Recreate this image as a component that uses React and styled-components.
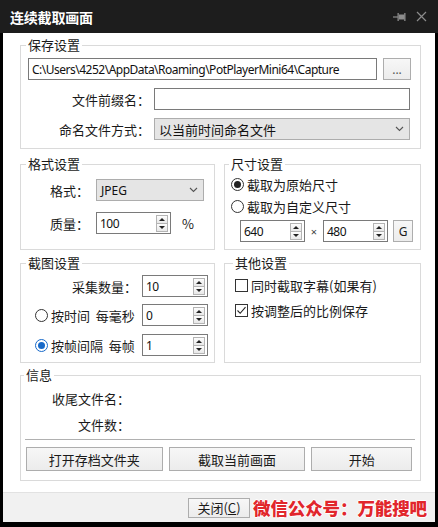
import React from 'react'
import styled, { createGlobalStyle } from 'styled-components'

const GlobalStyle = createGlobalStyle`
  html, body { margin: 0; padding: 0; background: #000; }
  body { font-family: "Noto Sans", "Noto Sans CJK SC", sans-serif; color: #1a1a1a; }
`

const cjk = `"Noto Sans CJK SC", "Noto Sans", sans-serif`

const Frame = styled.div`
  width: 438px;
  height: 527px;
  box-sizing: border-box;
  background: #000;
  padding: 0 3px 5px;
  display: flex;
  flex-direction: column;
`

const TitleBar = styled.div`
  height: 33px;
  margin: 0 -3px;
  padding: 0 10px;
  background: #1d1d1d;
  display: flex;
  align-items: center;
  justify-content: space-between;
`

const Title = styled.div`
  color: #fff;
  font: 700 14px ${cjk};
  letter-spacing: -0.2px;
`

const TitleIcons = styled.div`
  display: flex;
  align-items: center;
  gap: 10px;
  margin-right: 1px;
`

const Body = styled.div`
  flex: 1;
  background: #fff;
  display: flex;
  flex-direction: column;
`

const Groups = styled.div`
  padding: 4px 0 0 17px;
  display: flex;
  flex-direction: column;
`

const Pair = styled.div`
  display: flex;
  gap: 9px;
  margin-top: ${p => p.$mt}px;
`

const Group = styled.fieldset`
  box-sizing: border-box;
  margin: ${p => p.$mt || 0}px 0 0;
  min-width: 0;
  width: ${p => p.$w}px;
  height: ${p => p.$h}px;
  border: 1px solid #dadada;
  padding: ${p => p.$pad};
  display: flex;
  flex-direction: column;
  gap: ${p => p.$gap || 0}px;
`

const Legend = styled.legend`
  font: 13px/16px ${cjk};
  color: #1a1a1a;
  padding: 0 2px;
  margin-left: -2px;
`

const Row = styled.div`
  display: flex;
  align-items: center;
  height: ${p => p.$h || 22}px;
  gap: ${p => p.$gap || 0}px;
  margin-top: ${p => p.$mt || 0}px;
`

const Label = styled.div`
  width: ${p => p.$w}px;
  box-sizing: border-box;
  padding-right: ${p => p.$pr || 0}px;
  padding-left: ${p => p.$pl || 0}px;
  text-align: ${p => (p.$left ? 'left' : 'right')};
  font: 13px ${cjk};
  color: #1a1a1a;
  white-space: nowrap;
`

const Field = styled.div`
  box-sizing: border-box;
  width: ${p => p.$w}px;
  height: 22px;
  border: 1px solid #7a7a7a;
  background: #fff;
  display: flex;
  align-items: center;
  padding: 0 2px 0 3px;
  font: 12px "Noto Sans", sans-serif;
  letter-spacing: -0.5px;
  color: #111;
  white-space: nowrap;
  overflow: hidden;
`

const FieldText = styled.span`
  flex: 1;
`

const SpinCol = styled.div`
  display: flex;
  flex-direction: column;
  width: 12px;
`

const SpinBtn = styled.div`
  box-sizing: border-box;
  height: 9px;
  border: 1px solid #b4b4b4;
  margin-top: ${p => (p.$down ? -1 : 0)}px;
  background: linear-gradient(#fdfdfd, #e8e8e8);
  display: flex;
  align-items: center;
  justify-content: center;
  &::after {
    content: '';
    border-left: 3px solid transparent;
    border-right: 3px solid transparent;
    ${p => (p.$down ? 'border-top: 3px solid #222;' : 'border-bottom: 3px solid #222;')}
  }
`

const Select = styled.div`
  box-sizing: border-box;
  width: ${p => p.$w}px;
  height: 22px;
  border: 1px solid #adadad;
  background: #e5e5e5;
  display: flex;
  align-items: center;
  justify-content: space-between;
  padding: 0 5px 0 4px;
  font: ${p => (p.$latin ? `12px "Noto Sans", sans-serif` : `13px ${cjk}`)};
  color: #111;
`

const Button = styled.div`
  box-sizing: border-box;
  width: ${p => p.$w}px;
  height: ${p => p.$h || 24}px;
  margin-left: ${p => p.$ml || 0}px;
  border: 1px solid #adadad;
  background: linear-gradient(#f7f7f7, #ececec);
  display: flex;
  align-items: center;
  justify-content: center;
  font: ${p => (p.$latin ? `12px "Noto Sans", sans-serif` : `13px ${cjk}`)};
  color: ${p => (p.$muted ? '#555' : '#1a1a1a')};
`

const Choice = styled.div`
  display: flex;
  align-items: center;
  gap: 3px;
  margin-left: ${p => p.$ml || 0}px;
  font: 13px ${cjk};
  color: #1a1a1a;
  white-space: nowrap;
`

const RadioDot = styled.span`
  box-sizing: border-box;
  width: 13px;
  height: 13px;
  border-radius: 50%;
  border: 1px solid ${p => (p.$blue ? '#1769c9' : '#333')};
  display: flex;
  align-items: center;
  justify-content: center;
  &::after {
    content: '';
    width: 7px;
    height: 7px;
    border-radius: 50%;
    background: ${p => (p.$blue ? '#1769c9' : '#222')};
    display: ${p => (p.$on ? 'block' : 'none')};
  }
`

const CheckBox = styled.span`
  box-sizing: border-box;
  width: 13px;
  height: 13px;
  border: 1px solid #333;
  display: flex;
  align-items: center;
  justify-content: center;
`

const Times = styled.span`
  width: 18px;
  text-align: center;
  font: 11px "Noto Sans", sans-serif;
  color: #444;
`

const Separator = styled.div`
  height: 1px;
  background: #b0b0b0;
  margin: 5px -1px 0 -1px;
  width: 390px;
`

const Footer = styled.div`
  margin-top: auto;
  height: 30px;
  box-sizing: border-box;
  background: #f1f1f1;
  border-top: 1px solid #e2e2e2;
  display: flex;
  align-items: center;
  justify-content: flex-end;
  padding: 0 8px 0 0;
  gap: 3px;
`

const Mark = styled.span`
  font: 900 17.5px ${cjk};
  color: #e1262c;
  letter-spacing: -0.1px;
  text-shadow: -1px 0 #fff, 1px 0 #fff, 0 -1px #fff, 0 1px #fff;
`

const Chevron = () => (
  <svg width="9" height="6" viewBox="0 0 9 6">
    <polyline points="1,1 4.5,4.5 8,1" fill="none" stroke="#555" strokeWidth="1.1" />
  </svg>
)

const Spinner = ({ w, value }) => (
  <Field $w={w}>
    <FieldText>{value}</FieldText>
    <SpinCol>
      <SpinBtn />
      <SpinBtn $down />
    </SpinCol>
  </Field>
)

const Radio = ({ on, blue, children }) => (
  <Choice>
    <RadioDot $on={on} $blue={blue} />
    {children}
  </Choice>
)

const Check = ({ on, children }) => (
  <Choice>
    <CheckBox>
      {on && (
        <svg width="11" height="11" viewBox="0 0 11 11">
          <polyline points="1.5,5.5 4.2,8.3 9.5,2.2" fill="none" stroke="#222" strokeWidth="1.1" />
        </svg>
      )}
    </CheckBox>
    {children}
  </Choice>
)

export default function App() {
  return (
    <>
      <GlobalStyle />
      <Frame>
        <TitleBar>
          <Title>连续截取画面</Title>
          <TitleIcons>
            <svg width="13" height="10" viewBox="0 0 13 10">
              <line x1="0" y1="5" x2="5" y2="5" stroke="#8c8c8c" strokeWidth="1.2" />
              <rect x="4.5" y="1" width="1.3" height="8" fill="#8c8c8c" />
              <rect x="6" y="2.5" width="5.5" height="5" fill="#8c8c8c" />
              <rect x="11.2" y="1" width="1.3" height="8" fill="#8c8c8c" />
            </svg>
            <svg width="11" height="11" viewBox="0 0 11 11">
              <path d="M1 1L10 10M10 1L1 10" stroke="#8c8c8c" strokeWidth="1.2" />
            </svg>
          </TitleIcons>
        </TitleBar>
        <Body>
          <Groups>
            <Group $w={401} $h={112} $pad="5px 9px 0 7px" $gap={8}>
              <Legend>保存设置</Legend>
              <Row $gap={6}>
                <Field $w={349}>C:\Users\4252\AppData\Roaming\PotPlayerMini64\Capture</Field>
                <Button $w={28} $h={22} $latin $muted>...</Button>
              </Row>
              <Row>
                <Label $w={126} $pr={4}>文件前缀名：</Label>
                <Field $w={256} />
              </Row>
              <Row>
                <Label $w={126} $pr={4}>命名文件方式：</Label>
                <Select $w={256}>
                  以当前时间命名文件
                  <Chevron />
                </Select>
              </Row>
            </Group>

            <Pair $mt={7}>
              <Group $w={195} $h={94} $pad="7px 8px 0 7px" $gap={11}>
                <Legend>格式设置</Legend>
                <Row>
                  <Label $w={68} $pr={7}>格式：</Label>
                  <Select $w={108} $latin>
                    JPEG
                    <Chevron />
                  </Select>
                </Row>
                <Row>
                  <Label $w={68} $pr={7}>质量：</Label>
                  <Spinner w={75} value="100" />
                  <Choice $ml={11}>%</Choice>
                </Row>
              </Group>
              <Group $w={197} $h={94} $pad="1px 6px 0 6px">
                <Legend>尺寸设置</Legend>
                <Row>
                  <Radio on>截取为原始尺寸</Radio>
                </Row>
                <Row>
                  <Radio>截取为自定义尺寸</Radio>
                </Row>
                <Row $mt={3}>
                  <Label $w={9} />
                  <Spinner w={65} value="640" />
                  <Times>×</Times>
                  <Spinner w={65} value="480" />
                  <Button $w={20} $h={22} $ml={5} $latin>G</Button>
                </Row>
              </Group>
            </Pair>

            <Pair $mt={5}>
              <Group $w={195} $h={108} $pad="4px 6px 0 7px" $gap={7}>
                <Legend>截图设置</Legend>
                <Row>
                  <Label $w={114} $pr={5}>采集数量：</Label>
                  <Spinner w={66} value="10" />
                </Row>
                <Row>
                  <Label $w={114} $pl={7} $left>
                    <Radio>按时间&nbsp;&nbsp;每毫秒</Radio>
                  </Label>
                  <Spinner w={66} value="0" />
                </Row>
                <Row $mt={1}>
                  <Label $w={114} $pl={7} $left>
                    <Radio on blue>按帧间隔&nbsp;&nbsp;每帧</Radio>
                  </Label>
                  <Spinner w={66} value="1" />
                </Row>
              </Group>
              <Group $w={197} $h={108} $pad="4px 6px 0 10px" $gap={5}>
                <Legend>其他设置</Legend>
                <Row $h={20}>
                  <Check>同时截取字幕(如果有)</Check>
                </Row>
                <Row $h={20}>
                  <Check on>按调整后的比例保存</Check>
                </Row>
              </Group>
            </Pair>

            <Group $w={401} $h={114} $mt={4} $pad="5px 8px 0 5px">
              <Legend>信息</Legend>
              <Row $h={20}>
                <Label $w={104}>收尾文件名：</Label>
              </Row>
              <Row $h={20} $mt={6}>
                <Label $w={104}>文件数：</Label>
              </Row>
              <Separator />
              <Row $h={24} $mt={7} $gap={6}>
                <Button $w={137}>打开存档文件夹</Button>
                <Button $w={137}>截取当前画面</Button>
                <Button $w={101}>开始</Button>
              </Row>
            </Group>
          </Groups>

          <Footer>
            <Button $w={62} $h={20}>
              关闭(<u>C</u>)
            </Button>
            <Mark>微信公众号：万能搜吧</Mark>
          </Footer>
        </Body>
      </Frame>
    </>
  )
}
